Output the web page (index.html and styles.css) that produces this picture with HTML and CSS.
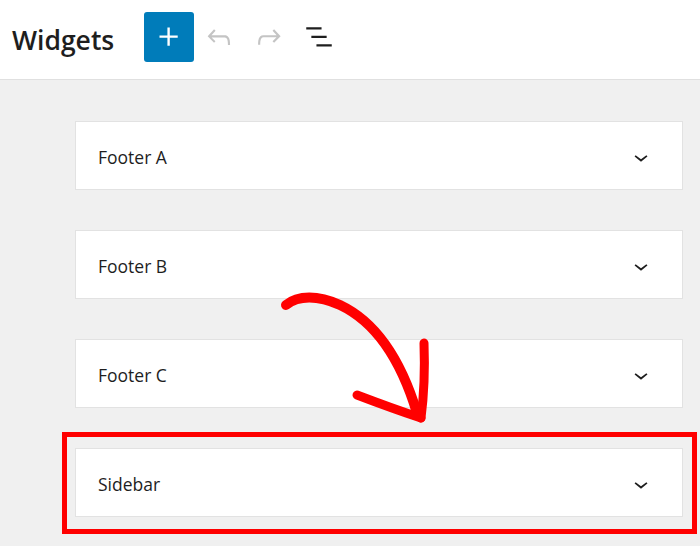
FILE: index.html
```html
<!DOCTYPE html>
<html lang="en">
<head>
<meta charset="utf-8">
<title>Widgets</title>
<link rel="stylesheet" href="styles.css">
</head>
<body>
<header class="topbar">
  <h1 class="title">Widgets</h1>
  <div class="tools">
    <button class="tool tool-primary" aria-label="Add block">
      <svg viewBox="0 0 24 24" width="38" height="38"><path d="M11 12.5V17.5H12.5V12.5H17.5V11H12.5V6H11V11H6V12.5H11Z" fill="#fff"/></svg>
    </button>
    <button class="tool tool-disabled" aria-label="Undo">
      <svg viewBox="0 0 24 24" width="34" height="34"><path d="M18.3 11.7c-.6-.6-1.4-.9-2.3-.9H6.7l2.9-3.3-1.1-1-4.5 5L8.5 16l1-1-2.7-2.7H16c.5 0 .9.2 1.3.5 1 1 1 3.4 1 4.5v.3h1.5v-.2c0-1.5 0-4.3-1.5-5.7z" fill="currentColor"/></svg>
    </button>
    <button class="tool tool-disabled" aria-label="Redo">
      <svg viewBox="0 0 24 24" width="34" height="34"><path d="M15.6 6.5l-1.1 1 2.9 3.3H8c-.9 0-1.7.3-2.3.9-1.4 1.5-1.4 4.2-1.4 5.6v.2h1.5v-.3c0-1.1 0-3.5 1-4.5.3-.3.7-.5 1.3-.5h9.2L14.5 15l1.1 1.1 4.6-4.6-4.6-5z" fill="currentColor"/></svg>
    </button>
    <button class="tool" aria-label="List view">
      <svg viewBox="0 0 24 24" width="34" height="34"><path d="M13.8 5.2H3v1.5h10.8V5.2zm-3.6 12v1.5H21v-1.5H10.2zm7.2-6H6.6v1.5h10.8v-1.5z" fill="currentColor"/></svg>
    </button>
  </div>
</header>

<main class="areas">
  <section class="area">
    <span class="area-name">Footer A</span>
    <svg class="chev" viewBox="0 0 24 24" width="28" height="28"><path d="M17.5 11.6L12 16l-5.5-4.4.9-1.2L12 14l4.6-3.6 1 1.2z" fill="currentColor"/></svg>
  </section>
  <section class="area">
    <span class="area-name">Footer B</span>
    <svg class="chev" viewBox="0 0 24 24" width="28" height="28"><path d="M17.5 11.6L12 16l-5.5-4.4.9-1.2L12 14l4.6-3.6 1 1.2z" fill="currentColor"/></svg>
  </section>
  <section class="area">
    <span class="area-name">Footer C</span>
    <svg class="chev" viewBox="0 0 24 24" width="28" height="28"><path d="M17.5 11.6L12 16l-5.5-4.4.9-1.2L12 14l4.6-3.6 1 1.2z" fill="currentColor"/></svg>
  </section>
  <section class="area">
    <span class="area-name">Sidebar</span>
    <svg class="chev" viewBox="0 0 24 24" width="28" height="28"><path d="M17.5 11.6L12 16l-5.5-4.4.9-1.2L12 14l4.6-3.6 1 1.2z" fill="currentColor"/></svg>
  </section>
</main>

<div class="highlight"></div>
<svg class="arrow" width="700" height="546" viewBox="0 0 700 546">
  <path d="M286 305 C 298 295, 318 295, 340 305 C 376 322, 401 360, 417 413" fill="none" stroke="#ff0000" stroke-width="10" stroke-linecap="round"/>
  <path d="M424 343 C 425 370, 424 395, 421 418" fill="none" stroke="#ff0000" stroke-width="9" stroke-linecap="round"/>
  <path d="M357 395 C 378 403, 400 411, 421 418" fill="none" stroke="#ff0000" stroke-width="9" stroke-linecap="round"/>
</svg>
</body>
</html>
```
FILE: styles.css
```css
html, body {
  margin: 0;
  padding: 0;
}
body {
  background: #f0f0f0;
  font-family: "Open Sans", "Noto Sans", sans-serif;
  color: #1e1e1e;
  width: 700px;
  height: 546px;
  overflow: hidden;
  position: relative;
}
.topbar {
  height: 80px;
  box-sizing: border-box;
  background: #fff;
  border-bottom: 1px solid #e0e0e0;
  display: flex;
  align-items: center;
  padding-left: 12px;
}
.title {
  margin: 0;
  font-size: 26.5px;
  font-weight: 600;
  color: #1e1e1e;
  letter-spacing: 0;
}
.tools {
  display: flex;
  align-items: center;
  margin-left: 30px;
  margin-bottom: 6px;
}
.tool {
  width: 50px;
  height: 50px;
  border: 0;
  background: transparent;
  padding: 0;
  display: flex;
  align-items: center;
  justify-content: center;
  color: #1e1e1e;
}
.tool-primary {
  background: #007cba;
  border-radius: 3px;
}
.tool-disabled {
  color: #c4c4c4;
}
.areas {
  padding: 41px 17px 0 75px;
  display: flex;
  flex-direction: column;
  gap: 40px;
}
.area {
  height: 69px;
  box-sizing: border-box;
  background: #fff;
  border: 1px solid #e2e2e2;
  display: flex;
  align-items: center;
  justify-content: space-between;
  padding: 2px 27px 0 22px;
}
.area-name {
  font-size: 17.5px;
  font-weight: 500;
  color: #1e1e1e;
}
.chev {
  color: #1e1e1e;
}
.highlight {
  position: absolute;
  left: 62px;
  top: 432px;
  width: 635px;
  height: 102px;
  box-sizing: border-box;
  border: 5px solid #ff0000;
}
.arrow {
  position: absolute;
  left: 0;
  top: 0;
  pointer-events: none;
}
```
